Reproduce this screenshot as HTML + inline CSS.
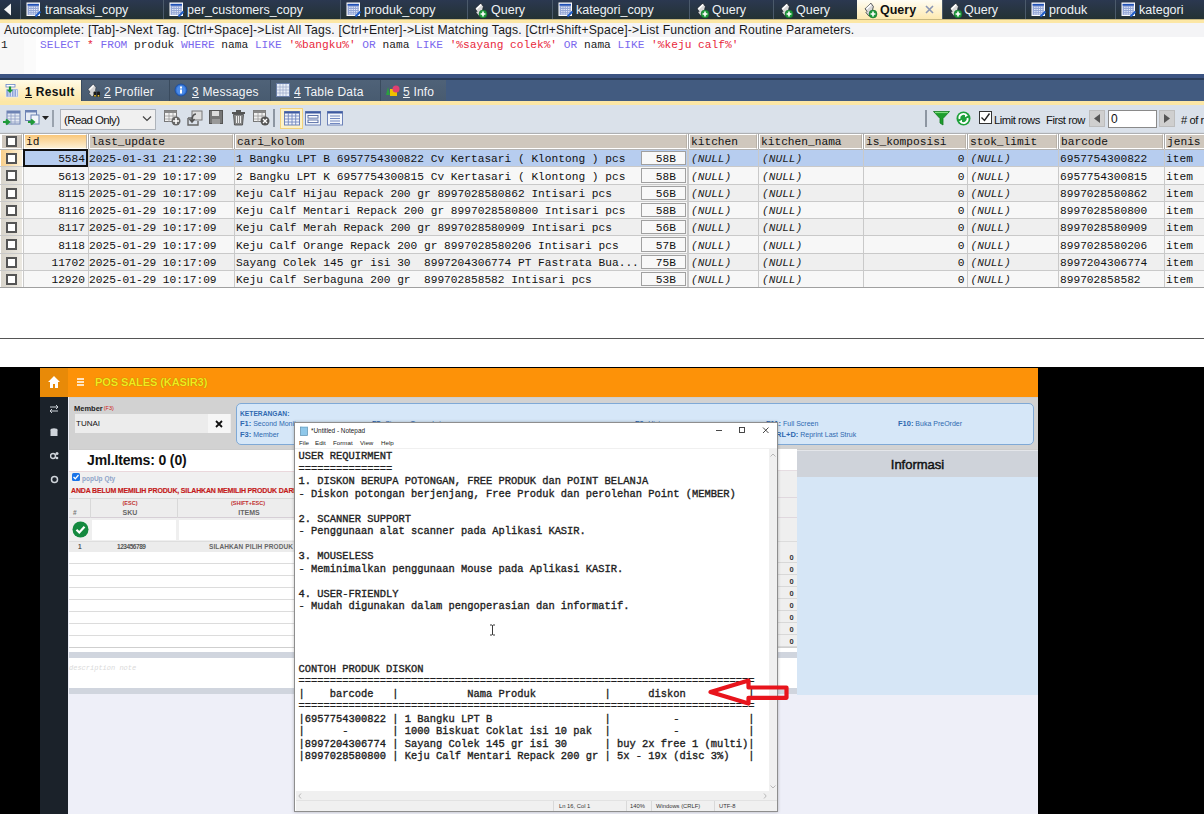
<!DOCTYPE html>
<html><head><meta charset="utf-8"><style>
*{margin:0;padding:0;box-sizing:border-box}
html,body{width:1204px;height:814px;overflow:hidden;background:#fff;position:relative;font-family:"Liberation Sans",sans-serif}
div,span{position:absolute}
.mono{font-family:"Liberation Mono",monospace}
.nw{white-space:nowrap}
</style></head><body>
<div style="left:0;top:0;width:1204px;height:19px;background:linear-gradient(#2b3850,#243234)"></div>
<div style="left:0;top:0;width:20px;height:19px;background:linear-gradient(#26344c,#1f2c36)"></div>
<svg style="position:absolute;left:0;top:0" width="20" height="19"><polygon points="4,9.5 11,3.5 11,15.5" fill="#f4f4f4"/></svg>
<div style="left:20px;top:0;width:1px;height:19px;background:#4b5a6b"></div>
<svg style="position:absolute;left:26px;top:2px" width="16" height="16" viewBox="0 0 16 16"><rect x="0.5" y="0.5" width="13.5" height="13.5" fill="#fdfdfd"/><rect x="1.6" y="1.6" width="11.3" height="11.3" fill="#93a6d6"/><rect x="1.6" y="2" width="11.3" height="1.6" fill="#1f50b6"/><path d="M3.2 5.3h9.5M3.2 7.5h9.5M3.2 9.7h9.5M3.2 11.9h9.5" stroke="#eef2fb" stroke-width="1" stroke-dasharray="1.3 1"/><path d="M9.5 14.5L14.5 9.5" stroke="#1f5ec8" stroke-width="2"/></svg>
<div class="nw" style="left:45px;top:1px;height:19px;line-height:19px;font-size:12.5px;color:#eef2f6">transaksi_copy</div>
<div style="left:163px;top:0;width:1px;height:19px;background:#4b5a6b"></div>
<svg style="position:absolute;left:169px;top:2px" width="16" height="16" viewBox="0 0 16 16"><rect x="0.5" y="0.5" width="13.5" height="13.5" fill="#fdfdfd"/><rect x="1.6" y="1.6" width="11.3" height="11.3" fill="#93a6d6"/><rect x="1.6" y="2" width="11.3" height="1.6" fill="#1f50b6"/><path d="M3.2 5.3h9.5M3.2 7.5h9.5M3.2 9.7h9.5M3.2 11.9h9.5" stroke="#eef2fb" stroke-width="1" stroke-dasharray="1.3 1"/><path d="M9.5 14.5L14.5 9.5" stroke="#1f5ec8" stroke-width="2"/></svg>
<div class="nw" style="left:187px;top:1px;height:19px;line-height:19px;font-size:12.5px;color:#eef2f6">per_customers_copy</div>
<div style="left:340px;top:0;width:1px;height:19px;background:#4b5a6b"></div>
<svg style="position:absolute;left:346px;top:2px" width="16" height="16" viewBox="0 0 16 16"><rect x="0.5" y="0.5" width="13.5" height="13.5" fill="#fdfdfd"/><rect x="1.6" y="1.6" width="11.3" height="11.3" fill="#93a6d6"/><rect x="1.6" y="2" width="11.3" height="1.6" fill="#1f50b6"/><path d="M3.2 5.3h9.5M3.2 7.5h9.5M3.2 9.7h9.5M3.2 11.9h9.5" stroke="#eef2fb" stroke-width="1" stroke-dasharray="1.3 1"/><path d="M9.5 14.5L14.5 9.5" stroke="#1f5ec8" stroke-width="2"/></svg>
<div class="nw" style="left:364px;top:1px;height:19px;line-height:19px;font-size:12.5px;color:#eef2f6">produk_copy</div>
<div style="left:467px;top:0;width:1px;height:19px;background:#4b5a6b"></div>
<svg style="position:absolute;left:474px;top:2px" width="15" height="17" viewBox="0 0 15 17"><path d="M7 1.2 L1 6.8 L3 9.3 L2 10.6 L5 14.2 L9.8 9.6 L8.6 7.5 L9.4 4.6 Z" fill="#d8d8d8" stroke="#1a2028" stroke-width="0.7"/><path d="M2.5 6.8 L7 2.6" stroke="#fff" stroke-width="1.6"/><circle cx="9" cy="12" r="4" fill="#1f9a3c" stroke="#0f6a28" stroke-width="0.5"/><path d="M9 9.6v4.8M6.6 12h4.8" stroke="#fff" stroke-width="1.6"/></svg>
<div class="nw" style="left:491px;top:1px;height:19px;line-height:19px;font-size:12.5px;color:#eef2f6">Query</div>
<div style="left:552px;top:0;width:1px;height:19px;background:#4b5a6b"></div>
<svg style="position:absolute;left:558px;top:2px" width="16" height="16" viewBox="0 0 16 16"><rect x="0.5" y="0.5" width="13.5" height="13.5" fill="#fdfdfd"/><rect x="1.6" y="1.6" width="11.3" height="11.3" fill="#93a6d6"/><rect x="1.6" y="2" width="11.3" height="1.6" fill="#1f50b6"/><path d="M3.2 5.3h9.5M3.2 7.5h9.5M3.2 9.7h9.5M3.2 11.9h9.5" stroke="#eef2fb" stroke-width="1" stroke-dasharray="1.3 1"/><path d="M9.5 14.5L14.5 9.5" stroke="#1f5ec8" stroke-width="2"/></svg>
<div class="nw" style="left:576px;top:1px;height:19px;line-height:19px;font-size:12.5px;color:#eef2f6">kategori_copy</div>
<div style="left:689px;top:0;width:1px;height:19px;background:#4b5a6b"></div>
<svg style="position:absolute;left:696px;top:2px" width="15" height="17" viewBox="0 0 15 17"><path d="M7 1.2 L1 6.8 L3 9.3 L2 10.6 L5 14.2 L9.8 9.6 L8.6 7.5 L9.4 4.6 Z" fill="#d8d8d8" stroke="#1a2028" stroke-width="0.7"/><path d="M2.5 6.8 L7 2.6" stroke="#fff" stroke-width="1.6"/><circle cx="9" cy="12" r="4" fill="#1f9a3c" stroke="#0f6a28" stroke-width="0.5"/><path d="M9 9.6v4.8M6.6 12h4.8" stroke="#fff" stroke-width="1.6"/></svg>
<div class="nw" style="left:712px;top:1px;height:19px;line-height:19px;font-size:12.5px;color:#eef2f6">Query</div>
<div style="left:773px;top:0;width:1px;height:19px;background:#4b5a6b"></div>
<svg style="position:absolute;left:780px;top:2px" width="15" height="17" viewBox="0 0 15 17"><path d="M7 1.2 L1 6.8 L3 9.3 L2 10.6 L5 14.2 L9.8 9.6 L8.6 7.5 L9.4 4.6 Z" fill="#d8d8d8" stroke="#1a2028" stroke-width="0.7"/><path d="M2.5 6.8 L7 2.6" stroke="#fff" stroke-width="1.6"/><circle cx="9" cy="12" r="4" fill="#1f9a3c" stroke="#0f6a28" stroke-width="0.5"/><path d="M9 9.6v4.8M6.6 12h4.8" stroke="#fff" stroke-width="1.6"/></svg>
<div class="nw" style="left:796px;top:1px;height:19px;line-height:19px;font-size:12.5px;color:#eef2f6">Query</div>
<div style="left:857px;top:0;width:85px;height:19px;background:linear-gradient(#fffdf4,#fde9b0)"></div>
<svg style="position:absolute;left:864px;top:2px" width="15" height="17" viewBox="0 0 15 17"><path d="M7 1.2 L1 6.8 L3 9.3 L2 10.6 L5 14.2 L9.8 9.6 L8.6 7.5 L9.4 4.6 Z" fill="#d8d8d8" stroke="#1a2028" stroke-width="0.7"/><path d="M2.5 6.8 L7 2.6" stroke="#fff" stroke-width="1.6"/><circle cx="9" cy="12" r="4" fill="#1f9a3c" stroke="#0f6a28" stroke-width="0.5"/><path d="M9 9.6v4.8M6.6 12h4.8" stroke="#fff" stroke-width="1.6"/></svg>
<div class="nw" style="left:880px;top:1px;height:19px;line-height:19px;font-size:12.5px;font-weight:bold;color:#111">Query</div>
<svg style="position:absolute;left:925px;top:5px" width="9" height="9"><path d="M1 1L8 8M8 1L1 8" stroke="#8a96b4" stroke-width="1.6"/></svg>
<div style="left:942px;top:0;width:1px;height:19px;background:#4b5a6b"></div>
<svg style="position:absolute;left:949px;top:2px" width="15" height="17" viewBox="0 0 15 17"><path d="M7 1.2 L1 6.8 L3 9.3 L2 10.6 L5 14.2 L9.8 9.6 L8.6 7.5 L9.4 4.6 Z" fill="#d8d8d8" stroke="#1a2028" stroke-width="0.7"/><path d="M2.5 6.8 L7 2.6" stroke="#fff" stroke-width="1.6"/><circle cx="9" cy="12" r="4" fill="#1f9a3c" stroke="#0f6a28" stroke-width="0.5"/><path d="M9 9.6v4.8M6.6 12h4.8" stroke="#fff" stroke-width="1.6"/></svg>
<div class="nw" style="left:964px;top:1px;height:19px;line-height:19px;font-size:12.5px;color:#eef2f6">Query</div>
<div style="left:1025px;top:0;width:1px;height:19px;background:#4b5a6b"></div>
<svg style="position:absolute;left:1031px;top:2px" width="16" height="16" viewBox="0 0 16 16"><rect x="0.5" y="0.5" width="13.5" height="13.5" fill="#fdfdfd"/><rect x="1.6" y="1.6" width="11.3" height="11.3" fill="#93a6d6"/><rect x="1.6" y="2" width="11.3" height="1.6" fill="#1f50b6"/><path d="M3.2 5.3h9.5M3.2 7.5h9.5M3.2 9.7h9.5M3.2 11.9h9.5" stroke="#eef2fb" stroke-width="1" stroke-dasharray="1.3 1"/><path d="M9.5 14.5L14.5 9.5" stroke="#1f5ec8" stroke-width="2"/></svg>
<div class="nw" style="left:1049px;top:1px;height:19px;line-height:19px;font-size:12.5px;color:#eef2f6">produk</div>
<div style="left:1115px;top:0;width:1px;height:19px;background:#4b5a6b"></div>
<svg style="position:absolute;left:1121px;top:2px" width="16" height="16" viewBox="0 0 16 16"><rect x="0.5" y="0.5" width="13.5" height="13.5" fill="#fdfdfd"/><rect x="1.6" y="1.6" width="11.3" height="11.3" fill="#93a6d6"/><rect x="1.6" y="2" width="11.3" height="1.6" fill="#1f50b6"/><path d="M3.2 5.3h9.5M3.2 7.5h9.5M3.2 9.7h9.5M3.2 11.9h9.5" stroke="#eef2fb" stroke-width="1" stroke-dasharray="1.3 1"/><path d="M9.5 14.5L14.5 9.5" stroke="#1f5ec8" stroke-width="2"/></svg>
<div class="nw" style="left:1139px;top:1px;height:19px;line-height:19px;font-size:12.5px;color:#eef2f6">kategori</div>
<div style="left:0;top:19px;width:1204px;height:4px;background:linear-gradient(#c8b880 0,#c8b880 25%,#fce7a6 25%)"></div>
<div style="left:0;top:23px;width:1204px;height:14px;background:#f4f4f6"></div>
<div class="nw" style="left:4px;top:23px;height:15px;line-height:15px;font-size:12.2px;letter-spacing:0.19px;color:#1a1a1a">Autocomplete: [Tab]-&gt;Next Tag. [Ctrl+Space]-&gt;List All Tags. [Ctrl+Enter]-&gt;List Matching Tags. [Ctrl+Shift+Space]-&gt;List Function and Routine Parameters.</div>
<div style="left:0;top:37px;width:1204px;height:37px;background:#fff"></div>
<div style="left:0;top:37px;width:24px;height:37px;background:#f7f7f7"></div>
<div style="left:24px;top:37px;width:12px;height:37px;background:#fbfbfb"></div>
<div class="mono nw" style="left:1px;top:38px;height:15px;line-height:15px;font-size:11.2px;color:#222">1</div>
<div class="mono" style="left:40px;top:38px;height:15px;line-height:15px;font-size:11.2px;white-space:pre"><span style="position:static;color:#7b68ee">SELECT</span><span style="position:static;color:#222"> </span><span style="position:static;color:#e8283c">*</span><span style="position:static;color:#222"> </span><span style="position:static;color:#7b68ee">FROM</span><span style="position:static;color:#222"> produk </span><span style="position:static;color:#7b68ee">WHERE</span><span style="position:static;color:#222"> nama </span><span style="position:static;color:#7b68ee">LIKE</span><span style="position:static;color:#222"> </span><span style="position:static;color:#e8283c">'%bangku%'</span><span style="position:static;color:#222"> </span><span style="position:static;color:#7b68ee">OR</span><span style="position:static;color:#222"> nama </span><span style="position:static;color:#7b68ee">LIKE</span><span style="position:static;color:#222"> </span><span style="position:static;color:#e8283c">'%sayang colek%'</span><span style="position:static;color:#222"> </span><span style="position:static;color:#7b68ee">OR</span><span style="position:static;color:#222"> nama </span><span style="position:static;color:#7b68ee">LIKE</span><span style="position:static;color:#222"> </span><span style="position:static;color:#e8283c">'%keju calf%'</span></div>
<div style="left:0;top:74px;width:1204px;height:5px;background:#3c5482"></div>
<div style="left:0;top:78px;width:1204px;height:2px;background:#2a3c58"></div>
<div style="left:0;top:80px;width:1204px;height:21px;background:#425b80"></div>
<div style="left:0px;top:80px;width:81px;height:21px;background:linear-gradient(#fffbe6,#fde7a8)"></div>
<div class="nw" style="left:25px;top:81.5px;height:21px;line-height:21px;font-size:12px;font-weight:bold;letter-spacing:0.35px;color:#111"><u style="text-decoration:underline">1</u> Result</div>
<div style="left:81px;top:80px;width:88px;height:21px;background:linear-gradient(#4f6278,#485b70);border-left:1px solid #3a4b5e"></div>
<div class="nw" style="left:104px;top:81.5px;height:21px;line-height:21px;font-size:12px;letter-spacing:0.2px;color:#f2f4f7"><u style="text-decoration:underline">2</u> Profiler</div>
<div style="left:169px;top:80px;width:101px;height:21px;background:linear-gradient(#4f6278,#485b70);border-left:1px solid #3a4b5e"></div>
<div class="nw" style="left:192px;top:81.5px;height:21px;line-height:21px;font-size:12px;letter-spacing:0.2px;color:#f2f4f7"><u style="text-decoration:underline">3</u> Messages</div>
<div style="left:270px;top:80px;width:110px;height:21px;background:linear-gradient(#4f6278,#485b70);border-left:1px solid #3a4b5e"></div>
<div class="nw" style="left:294px;top:81.5px;height:21px;line-height:21px;font-size:12px;letter-spacing:0.2px;color:#f2f4f7"><u style="text-decoration:underline">4</u> Table Data</div>
<div style="left:380px;top:80px;width:66px;height:21px;background:linear-gradient(#4f6278,#485b70);border-left:1px solid #3a4b5e"></div>
<div class="nw" style="left:403px;top:81.5px;height:21px;line-height:21px;font-size:12px;letter-spacing:0.2px;color:#f2f4f7"><u style="text-decoration:underline">5</u> Info</div>
<svg style="position:absolute;left:5px;top:83px" width="14" height="15"><rect x="1" y="1.5" width="9" height="2.5" fill="#fff" stroke="#6a86c8" stroke-width="0.8"/><rect x="1" y="6" width="12" height="8" fill="#8ea3d8" stroke="#e8eefa" stroke-width="0.6"/><path d="M4 7v6.5M6.5 7v6.5M9 7v6.5M11.5 7v6.5" stroke="#f2f5fc" stroke-width="0.8"/><path d="M5 3.5v4" stroke="#1e9a30" stroke-width="2.2"/><path d="M1.8 6.8L5 10 8.2 6.8Z" fill="#1e9a30"/></svg>
<svg style="position:absolute;left:87px;top:83px" width="14" height="15"><path d="M6.5 1L1 6.5 3 9 2 10.5 5 14 9.5 9.5 8.5 7.5 9 4.5Z" fill="#d4d4d4" stroke="#2a3340" stroke-width="0.6"/><path d="M2.5 6.5L6.5 2.5" stroke="#fff" stroke-width="1.4"/><rect x="6.5" y="8.5" width="3" height="5.5" rx="1" fill="#1a1a1a"/><rect x="10" y="8.5" width="3" height="5.5" rx="1" fill="#1a1a1a"/><rect x="7.2" y="12" width="1.6" height="1.6" fill="#e8c030"/><rect x="10.7" y="12" width="1.6" height="1.6" fill="#e8c030"/></svg>
<svg style="position:absolute;left:174px;top:83px" width="14" height="14"><circle cx="7" cy="7" r="6" fill="#2f6fd0" stroke="#1b4a9a" stroke-width="0.8"/><circle cx="7" cy="7" r="4.5" fill="#4a8ae8"/><rect x="6" y="3.5" width="2" height="2" fill="#fff"/><rect x="6" y="6.5" width="2" height="4" fill="#fff"/></svg>
<svg style="position:absolute;left:276px;top:83px" width="14" height="14"><rect x="0.5" y="0.5" width="13" height="13" fill="#e8eef8" stroke="#6a7fa8"/><path d="M1 4h12M1 7h12M1 10h12M4 1v12M7 1v12M10 1v12" stroke="#9aa8c8" stroke-width="0.7"/></svg>
<svg style="position:absolute;left:385px;top:83px" width="16" height="14"><path d="M1 12L3 4L5 12Z" fill="#2aa040"/><rect x="5" y="6" width="7" height="7" fill="#f0c000"/><circle cx="11" cy="6" r="3.5" fill="#e04070"/></svg>
<div style="left:0;top:101px;width:1204px;height:4px;background:#fce7a6"></div>
<div style="left:446px;top:80px;width:758px;height:21px;background:#425b80"></div>
<div style="left:0;top:105px;width:1204px;height:28px;background:#dae1ea"></div>

<svg style="position:absolute;left:3px;top:110px" width="18" height="16"><rect x="4" y="1" width="13" height="13" fill="#e6ebf4" stroke="#6d82b3"/><rect x="4" y="1" width="13" height="2.5" fill="#6d82b3"/><path d="M4 6h13M4 9h13M4 12h13M8 3v11M12 3v11" stroke="#8d9cc4" stroke-width="0.8"/><path d="M0 12h5M3 9.5l3 2.5-3 2.5" stroke="#1f9a3a" stroke-width="2.2" fill="none"/></svg>
<svg style="position:absolute;left:25px;top:110px" width="26" height="16"><rect x="0.5" y="0.5" width="11" height="10" fill="#e6ebf4" stroke="#6d82b3"/><rect x="0.5" y="0.5" width="11" height="2" fill="#6d82b3"/><rect x="6" y="5" width="8" height="9" fill="#f4f6fa" stroke="#6d82b3"/><path d="M3 12h5M6 9.5l3 2.5-3 2.5" stroke="#1f9a3a" stroke-width="2" fill="none"/><polygon points="17,6 24,6 20.5,10" fill="#222"/></svg>
<div style="left:52px;top:110px;width:2px;height:17px;background:#9aa3ae"></div>
<svg style="position:absolute;left:164px;top:110px" width="17" height="16"><rect x="0.5" y="0.5" width="12" height="11" fill="#f0f0f0" stroke="#777"/><rect x="0.5" y="0.5" width="12" height="2.5" fill="#888"/><path d="M1 6h11M1 9h11M5 3v9M9 3v9" stroke="#999" stroke-width="0.8"/><circle cx="12" cy="11" r="4.5" fill="#666"/><path d="M12 8v6M9 11h6" stroke="#fff" stroke-width="1.6"/></svg>
<svg style="position:absolute;left:187px;top:110px" width="16" height="16"><rect x="5" y="1" width="10" height="9" fill="#ddd" stroke="#777"/><path d="M1 8h4M1 8v7h10v-4" stroke="#666" stroke-width="1.4" fill="none"/><path d="M9 4C5 4 5 8 5 11M2.5 9L5 12L7.5 9" stroke="#555" stroke-width="1.6" fill="none"/></svg>
<svg style="position:absolute;left:209px;top:110px" width="15" height="15"><rect x="0.5" y="0.5" width="13" height="13" fill="#777" stroke="#555"/><rect x="3" y="1" width="7" height="5" fill="#ddd"/><rect x="3" y="9" width="8" height="5" fill="#999"/></svg>
<svg style="position:absolute;left:231px;top:109px" width="15" height="17"><rect x="1" y="3" width="13" height="2" fill="#555"/><rect x="5" y="1" width="5" height="2" fill="#555"/><path d="M2.5 5.5L3.5 16H11.5L12.5 5.5Z" fill="#888" stroke="#444" stroke-width="0.8"/><path d="M5.5 7v7M7.5 7v7M9.5 7v7" stroke="#eee" stroke-width="1"/></svg>
<svg style="position:absolute;left:253px;top:110px" width="17" height="16"><rect x="0.5" y="0.5" width="12" height="11" fill="#f0f0f0" stroke="#777"/><rect x="0.5" y="0.5" width="12" height="2.5" fill="#888"/><path d="M1 6h11M1 9h11M5 3v9M9 3v9" stroke="#999" stroke-width="0.8"/><circle cx="12" cy="11" r="4.5" fill="#555"/><path d="M10 9l4 4M14 9l-4 4" stroke="#fff" stroke-width="1.4"/></svg>
<div style="left:273px;top:109px;width:2px;height:18px;background:#8d96a2"></div>
<div style="left:280px;top:108px;width:23px;height:21px;background:#fdf2c8;border:1px solid #f3d27a"></div>
<svg style="position:absolute;left:284px;top:111px" width="16" height="15"><rect x="0.5" y="0.5" width="15" height="13.5" fill="#f2f5fb" stroke="#6d82b8"/><rect x="0.5" y="0.5" width="15" height="2" fill="#3e5aa0"/><path d="M1 5h14M1 8h14M1 11h14M4.3 2v12M8 2v12M11.7 2v12" stroke="#7288c0" stroke-width="0.9"/></svg>
<svg style="position:absolute;left:305px;top:111px" width="16" height="15"><rect x="0.5" y="0.5" width="15" height="13.5" fill="#f2f5fb" stroke="#6d82b8"/><rect x="0.5" y="0.5" width="15" height="2" fill="#3e5aa0"/><rect x="3" y="4.5" width="10" height="2.6" fill="#fff" stroke="#4e66a0" stroke-width="0.9"/><rect x="3" y="9" width="10" height="2.6" fill="#fff" stroke="#4e66a0" stroke-width="0.9"/></svg>
<svg style="position:absolute;left:327px;top:111px" width="16" height="15"><rect x="0.5" y="0.5" width="15" height="13.5" fill="#f2f5fb" stroke="#6d82b8"/><rect x="0.5" y="0.5" width="15" height="2" fill="#3e5aa0"/><path d="M3 5h10M3 7.5h10M3 10h10M3 12.5h10" stroke="#7288c0" stroke-width="1"/></svg>
<div style="left:925px;top:110px;width:2px;height:17px;background:#8d96a2"></div>
<svg style="position:absolute;left:933px;top:111px" width="17" height="15"><path d="M0.5 0.5H16.5L10 7.5V14L7 12V7.5Z" fill="#1e9e2e" stroke="#137a20" stroke-width="0.8"/><path d="M2 1.5H15" stroke="#7fdc7f" stroke-width="1.2"/></svg>
<svg style="position:absolute;left:956px;top:111px" width="15" height="15"><circle cx="7.5" cy="7.5" r="7" fill="#1ea03a"/><path d="M3.5 8A4 4 0 0 1 10.5 4.5M11.5 7A4 4 0 0 1 4.5 10.5" stroke="#fff" stroke-width="1.8" fill="none"/><path d="M9 2.5l3 2-3 1.8z M6 12.5l-3-2 3-1.8z" fill="#fff"/></svg>
<div style="left:979px;top:111px;width:13px;height:13px;background:#fff;border:1px solid #333"></div>
<svg style="position:absolute;left:980px;top:112px" width="11" height="11"><path d="M1.5 5.5L4.5 8.5L9.5 1.5" stroke="#222" stroke-width="1.4" fill="none"/></svg>
<div class="nw" style="left:994px;top:112.5px;line-height:15px;font-size:11.2px;letter-spacing:-0.45px;color:#111">Limit rows</div>
<div class="nw" style="left:1046px;top:112.5px;line-height:15px;font-size:11.2px;letter-spacing:-0.45px;color:#111">First row</div>
<div style="left:1089px;top:110px;width:16px;height:17px;background:#cfcfcf;border:1px solid #bdbdbd"></div>
<svg style="position:absolute;left:1092px;top:113px" width="10" height="11"><polygon points="2,5.5 8,1 8,10" fill="#555"/></svg>
<div style="left:1108px;top:110px;width:49px;height:18px;background:#fff;border:1px solid #8a8a8a"></div>
<div class="nw" style="left:1111px;top:112px;line-height:15px;font-size:12px;color:#111">0</div>
<div style="left:1159px;top:110px;width:16px;height:17px;background:#cfcfcf;border:1px solid #bdbdbd"></div>
<svg style="position:absolute;left:1162px;top:113px" width="10" height="11"><polygon points="8,5.5 2,1 2,10" fill="#555"/></svg>
<div class="nw" style="left:1181px;top:112.5px;line-height:15px;font-size:11.2px;letter-spacing:-0.45px;color:#111"># of r</div>
<div style="left:60px;top:109px;width:96px;height:21px;background:#f0f0f0;border:1px solid #aeb4bb"></div>
<div class="nw" style="left:64px;top:110.5px;line-height:18px;font-size:11.5px;letter-spacing:-0.6px;color:#111">(Read Only)</div>
<svg style="position:absolute;left:142px;top:115px" width="10" height="8"><path d="M1 1.5L5 5.5L9 1.5" stroke="#444" stroke-width="1.2" fill="none"/></svg>

<div style="left:0;top:132px;width:1204px;height:1px;background:#d4dae2"></div>
<div style="left:0;top:133px;width:1204px;height:155px;background:#fff"></div>
<div style="left:0;top:133px;width:1204px;height:1px;background:#aeb0b3"></div>
<div style="left:1px;top:134px;width:21px;height:15px;background:#cfc7bd;border-top:1px solid #fff;border-left:1px solid #fff;border-bottom:1px solid #fff;border-right:1px solid #b9b2a8"></div>
<div style="left:24px;top:134px;width:63px;height:15px;background:linear-gradient(#f9c77a,#fdf0d4);border-top:1px solid #fff;border-left:1px solid #fff;border-bottom:1px solid #fff;border-right:1px solid #b9b2a8"></div>
<div style="left:23px;top:134px;width:1px;height:16px;background:#a9a9a9"></div>
<div class="mono nw" style="left:26px;top:134px;height:16px;line-height:16px;font-size:11.2px;color:#111">id</div>
<div style="left:89px;top:134px;width:144px;height:15px;background:#cfc7bd;border-top:1px solid #fff;border-left:1px solid #fff;border-bottom:1px solid #fff;border-right:1px solid #b9b2a8"></div>
<div style="left:88px;top:134px;width:1px;height:16px;background:#a9a9a9"></div>
<div class="mono nw" style="left:91px;top:134px;height:16px;line-height:16px;font-size:11.2px;color:#111">last_update</div>
<div style="left:235px;top:134px;width:452px;height:15px;background:#cfc7bd;border-top:1px solid #fff;border-left:1px solid #fff;border-bottom:1px solid #fff;border-right:1px solid #b9b2a8"></div>
<div style="left:234px;top:134px;width:1px;height:16px;background:#a9a9a9"></div>
<div class="mono nw" style="left:237px;top:134px;height:16px;line-height:16px;font-size:11.2px;color:#111">cari_kolom</div>
<div style="left:689px;top:134px;width:68px;height:15px;background:#cfc7bd;border-top:1px solid #fff;border-left:1px solid #fff;border-bottom:1px solid #fff;border-right:1px solid #b9b2a8"></div>
<div style="left:688px;top:134px;width:1px;height:16px;background:#a9a9a9"></div>
<div class="mono nw" style="left:691px;top:134px;height:16px;line-height:16px;font-size:11.2px;color:#111">kitchen</div>
<div style="left:759px;top:134px;width:103px;height:15px;background:#cfc7bd;border-top:1px solid #fff;border-left:1px solid #fff;border-bottom:1px solid #fff;border-right:1px solid #b9b2a8"></div>
<div style="left:758px;top:134px;width:1px;height:16px;background:#a9a9a9"></div>
<div class="mono nw" style="left:761px;top:134px;height:16px;line-height:16px;font-size:11.2px;color:#111">kitchen_nama</div>
<div style="left:864px;top:134px;width:102px;height:15px;background:#cfc7bd;border-top:1px solid #fff;border-left:1px solid #fff;border-bottom:1px solid #fff;border-right:1px solid #b9b2a8"></div>
<div style="left:863px;top:134px;width:1px;height:16px;background:#a9a9a9"></div>
<div class="mono nw" style="left:866px;top:134px;height:16px;line-height:16px;font-size:11.2px;color:#111">is_komposisi</div>
<div style="left:968px;top:134px;width:89px;height:15px;background:#cfc7bd;border-top:1px solid #fff;border-left:1px solid #fff;border-bottom:1px solid #fff;border-right:1px solid #b9b2a8"></div>
<div style="left:967px;top:134px;width:1px;height:16px;background:#a9a9a9"></div>
<div class="mono nw" style="left:970px;top:134px;height:16px;line-height:16px;font-size:11.2px;color:#111">stok_limit</div>
<div style="left:1059px;top:134px;width:104px;height:15px;background:#cfc7bd;border-top:1px solid #fff;border-left:1px solid #fff;border-bottom:1px solid #fff;border-right:1px solid #b9b2a8"></div>
<div style="left:1058px;top:134px;width:1px;height:16px;background:#a9a9a9"></div>
<div class="mono nw" style="left:1061px;top:134px;height:16px;line-height:16px;font-size:11.2px;color:#111">barcode</div>
<div style="left:1165px;top:134px;width:44px;height:15px;background:#cfc7bd;border-top:1px solid #fff;border-left:1px solid #fff;border-bottom:1px solid #fff;border-right:1px solid #b9b2a8"></div>
<div style="left:1164px;top:134px;width:1px;height:16px;background:#a9a9a9"></div>
<div class="mono nw" style="left:1167px;top:134px;height:16px;line-height:16px;font-size:11.2px;color:#111">jenis</div>
<div style="left:0;top:149px;width:1204px;height:1px;background:#b4b4b4"></div>
<div style="left:6px;top:136px;width:11px;height:11px;background:#fff;border:2px solid #555"></div>
<div style="left:23px;top:150px;width:1181px;height:16px;background:#b7cdef"></div>
<div style="left:1px;top:150px;width:21px;height:16px;background:linear-gradient(90deg,#f9cf8a,#fdf1d8)"></div>
<div style="left:6px;top:152.5px;width:11px;height:11px;background:#fff;border:2px solid #555"></div>
<div style="left:0;top:166px;width:1204px;height:1px;background:#c9c9c9"></div>
<div class="mono" style="right:1119px;white-space:pre;top:150.8px;height:17px;line-height:17px;font-size:11.2px;color:#111">5584</div>
<div class="mono" style="left:89px;white-space:pre;top:150.8px;height:17px;line-height:17px;font-size:11.2px;color:#111">2025-01-31 21:22:30</div>
<div class="mono" style="left:236px;white-space:pre;top:150.8px;height:17px;line-height:17px;font-size:11.2px;color:#111">1 Bangku LPT B 6957754300822 Cv Kertasari ( Klontong ) pcs</div>
<div style="left:641px;top:151px;width:45px;height:14px;background:#f8f8f8;border:1px solid #a0a0a0"></div>
<div class="mono" style="right:528px;white-space:pre;top:150.8px;height:17px;line-height:17px;font-size:11.2px;color:#111">58B</div>
<div class="mono" style="left:691px;white-space:pre;top:150.8px;height:17px;line-height:17px;font-size:11.2px;color:#222;font-style:italic">(NULL)</div>
<div class="mono" style="left:762px;white-space:pre;top:150.8px;height:17px;line-height:17px;font-size:11.2px;color:#222;font-style:italic">(NULL)</div>
<div class="mono" style="right:239.5px;white-space:pre;top:150.8px;height:17px;line-height:17px;font-size:11.2px;color:#111">0</div>
<div class="mono" style="left:970.5px;white-space:pre;top:150.8px;height:17px;line-height:17px;font-size:11.2px;color:#222;font-style:italic">(NULL)</div>
<div class="mono" style="left:1060px;white-space:pre;top:150.8px;height:17px;line-height:17px;font-size:11.2px;color:#111">6957754300822</div>
<div class="mono" style="left:1166px;white-space:pre;top:150.8px;height:17px;line-height:17px;font-size:11.2px;color:#111">item</div>
<div style="left:23px;top:167px;width:1181px;height:17px;background:#f7f7f7"></div>
<div style="left:1px;top:167px;width:21px;height:17px;background:linear-gradient(90deg,#d8d4cb,#ece9e2)"></div>
<div style="left:6px;top:169.5px;width:11px;height:11px;background:#fff;border:2px solid #555"></div>
<div style="left:0;top:184px;width:1204px;height:1px;background:#c9c9c9"></div>
<div class="mono" style="right:1119px;white-space:pre;top:167.8px;height:18px;line-height:18px;font-size:11.2px;color:#111">5613</div>
<div class="mono" style="left:89px;white-space:pre;top:167.8px;height:18px;line-height:18px;font-size:11.2px;color:#111">2025-01-29 10:17:09</div>
<div class="mono" style="left:236px;white-space:pre;top:167.8px;height:18px;line-height:18px;font-size:11.2px;color:#111">2 Bangku LPT K 6957754300815 Cv Kertasari ( Klontong ) pcs</div>
<div style="left:641px;top:168px;width:45px;height:15px;background:#f8f8f8;border:1px solid #a0a0a0"></div>
<div class="mono" style="right:528px;white-space:pre;top:167.8px;height:18px;line-height:18px;font-size:11.2px;color:#111">58B</div>
<div class="mono" style="left:691px;white-space:pre;top:167.8px;height:18px;line-height:18px;font-size:11.2px;color:#222;font-style:italic">(NULL)</div>
<div class="mono" style="left:762px;white-space:pre;top:167.8px;height:18px;line-height:18px;font-size:11.2px;color:#222;font-style:italic">(NULL)</div>
<div class="mono" style="right:239.5px;white-space:pre;top:167.8px;height:18px;line-height:18px;font-size:11.2px;color:#111">0</div>
<div class="mono" style="left:970.5px;white-space:pre;top:167.8px;height:18px;line-height:18px;font-size:11.2px;color:#222;font-style:italic">(NULL)</div>
<div class="mono" style="left:1060px;white-space:pre;top:167.8px;height:18px;line-height:18px;font-size:11.2px;color:#111">6957754300815</div>
<div class="mono" style="left:1166px;white-space:pre;top:167.8px;height:18px;line-height:18px;font-size:11.2px;color:#111">item</div>
<div style="left:23px;top:185px;width:1181px;height:16px;background:#efefef"></div>
<div style="left:1px;top:185px;width:21px;height:16px;background:linear-gradient(90deg,#d8d4cb,#ece9e2)"></div>
<div style="left:6px;top:187.5px;width:11px;height:11px;background:#fff;border:2px solid #555"></div>
<div style="left:0;top:201px;width:1204px;height:1px;background:#c9c9c9"></div>
<div class="mono" style="right:1119px;white-space:pre;top:185.8px;height:17px;line-height:17px;font-size:11.2px;color:#111">8115</div>
<div class="mono" style="left:89px;white-space:pre;top:185.8px;height:17px;line-height:17px;font-size:11.2px;color:#111">2025-01-29 10:17:09</div>
<div class="mono" style="left:236px;white-space:pre;top:185.8px;height:17px;line-height:17px;font-size:11.2px;color:#111">Keju Calf Hijau Repack 200 gr 8997028580862 Intisari pcs</div>
<div style="left:641px;top:186px;width:45px;height:14px;background:#f8f8f8;border:1px solid #a0a0a0"></div>
<div class="mono" style="right:528px;white-space:pre;top:185.8px;height:17px;line-height:17px;font-size:11.2px;color:#111">56B</div>
<div class="mono" style="left:691px;white-space:pre;top:185.8px;height:17px;line-height:17px;font-size:11.2px;color:#222;font-style:italic">(NULL)</div>
<div class="mono" style="left:762px;white-space:pre;top:185.8px;height:17px;line-height:17px;font-size:11.2px;color:#222;font-style:italic">(NULL)</div>
<div class="mono" style="right:239.5px;white-space:pre;top:185.8px;height:17px;line-height:17px;font-size:11.2px;color:#111">0</div>
<div class="mono" style="left:970.5px;white-space:pre;top:185.8px;height:17px;line-height:17px;font-size:11.2px;color:#222;font-style:italic">(NULL)</div>
<div class="mono" style="left:1060px;white-space:pre;top:185.8px;height:17px;line-height:17px;font-size:11.2px;color:#111">8997028580862</div>
<div class="mono" style="left:1166px;white-space:pre;top:185.8px;height:17px;line-height:17px;font-size:11.2px;color:#111">item</div>
<div style="left:23px;top:202px;width:1181px;height:16px;background:#f7f7f7"></div>
<div style="left:1px;top:202px;width:21px;height:16px;background:linear-gradient(90deg,#d8d4cb,#ece9e2)"></div>
<div style="left:6px;top:204.5px;width:11px;height:11px;background:#fff;border:2px solid #555"></div>
<div style="left:0;top:218px;width:1204px;height:1px;background:#c9c9c9"></div>
<div class="mono" style="right:1119px;white-space:pre;top:202.8px;height:17px;line-height:17px;font-size:11.2px;color:#111">8116</div>
<div class="mono" style="left:89px;white-space:pre;top:202.8px;height:17px;line-height:17px;font-size:11.2px;color:#111">2025-01-29 10:17:09</div>
<div class="mono" style="left:236px;white-space:pre;top:202.8px;height:17px;line-height:17px;font-size:11.2px;color:#111">Keju Calf Mentari Repack 200 gr 8997028580800 Intisari pcs</div>
<div style="left:641px;top:203px;width:45px;height:14px;background:#f8f8f8;border:1px solid #a0a0a0"></div>
<div class="mono" style="right:528px;white-space:pre;top:202.8px;height:17px;line-height:17px;font-size:11.2px;color:#111">58B</div>
<div class="mono" style="left:691px;white-space:pre;top:202.8px;height:17px;line-height:17px;font-size:11.2px;color:#222;font-style:italic">(NULL)</div>
<div class="mono" style="left:762px;white-space:pre;top:202.8px;height:17px;line-height:17px;font-size:11.2px;color:#222;font-style:italic">(NULL)</div>
<div class="mono" style="right:239.5px;white-space:pre;top:202.8px;height:17px;line-height:17px;font-size:11.2px;color:#111">0</div>
<div class="mono" style="left:970.5px;white-space:pre;top:202.8px;height:17px;line-height:17px;font-size:11.2px;color:#222;font-style:italic">(NULL)</div>
<div class="mono" style="left:1060px;white-space:pre;top:202.8px;height:17px;line-height:17px;font-size:11.2px;color:#111">8997028580800</div>
<div class="mono" style="left:1166px;white-space:pre;top:202.8px;height:17px;line-height:17px;font-size:11.2px;color:#111">item</div>
<div style="left:23px;top:219px;width:1181px;height:16px;background:#efefef"></div>
<div style="left:1px;top:219px;width:21px;height:16px;background:linear-gradient(90deg,#d8d4cb,#ece9e2)"></div>
<div style="left:6px;top:221.5px;width:11px;height:11px;background:#fff;border:2px solid #555"></div>
<div style="left:0;top:235px;width:1204px;height:1px;background:#c9c9c9"></div>
<div class="mono" style="right:1119px;white-space:pre;top:219.8px;height:17px;line-height:17px;font-size:11.2px;color:#111">8117</div>
<div class="mono" style="left:89px;white-space:pre;top:219.8px;height:17px;line-height:17px;font-size:11.2px;color:#111">2025-01-29 10:17:09</div>
<div class="mono" style="left:236px;white-space:pre;top:219.8px;height:17px;line-height:17px;font-size:11.2px;color:#111">Keju Calf Merah Repack 200 gr 8997028580909 Intisari pcs</div>
<div style="left:641px;top:220px;width:45px;height:14px;background:#f8f8f8;border:1px solid #a0a0a0"></div>
<div class="mono" style="right:528px;white-space:pre;top:219.8px;height:17px;line-height:17px;font-size:11.2px;color:#111">56B</div>
<div class="mono" style="left:691px;white-space:pre;top:219.8px;height:17px;line-height:17px;font-size:11.2px;color:#222;font-style:italic">(NULL)</div>
<div class="mono" style="left:762px;white-space:pre;top:219.8px;height:17px;line-height:17px;font-size:11.2px;color:#222;font-style:italic">(NULL)</div>
<div class="mono" style="right:239.5px;white-space:pre;top:219.8px;height:17px;line-height:17px;font-size:11.2px;color:#111">0</div>
<div class="mono" style="left:970.5px;white-space:pre;top:219.8px;height:17px;line-height:17px;font-size:11.2px;color:#222;font-style:italic">(NULL)</div>
<div class="mono" style="left:1060px;white-space:pre;top:219.8px;height:17px;line-height:17px;font-size:11.2px;color:#111">8997028580909</div>
<div class="mono" style="left:1166px;white-space:pre;top:219.8px;height:17px;line-height:17px;font-size:11.2px;color:#111">item</div>
<div style="left:23px;top:236px;width:1181px;height:17px;background:#f7f7f7"></div>
<div style="left:1px;top:236px;width:21px;height:17px;background:linear-gradient(90deg,#d8d4cb,#ece9e2)"></div>
<div style="left:6px;top:238.5px;width:11px;height:11px;background:#fff;border:2px solid #555"></div>
<div style="left:0;top:253px;width:1204px;height:1px;background:#c9c9c9"></div>
<div class="mono" style="right:1119px;white-space:pre;top:236.8px;height:18px;line-height:18px;font-size:11.2px;color:#111">8118</div>
<div class="mono" style="left:89px;white-space:pre;top:236.8px;height:18px;line-height:18px;font-size:11.2px;color:#111">2025-01-29 10:17:09</div>
<div class="mono" style="left:236px;white-space:pre;top:236.8px;height:18px;line-height:18px;font-size:11.2px;color:#111">Keju Calf Orange Repack 200 gr 8997028580206 Intisari pcs</div>
<div style="left:641px;top:237px;width:45px;height:15px;background:#f8f8f8;border:1px solid #a0a0a0"></div>
<div class="mono" style="right:528px;white-space:pre;top:236.8px;height:18px;line-height:18px;font-size:11.2px;color:#111">57B</div>
<div class="mono" style="left:691px;white-space:pre;top:236.8px;height:18px;line-height:18px;font-size:11.2px;color:#222;font-style:italic">(NULL)</div>
<div class="mono" style="left:762px;white-space:pre;top:236.8px;height:18px;line-height:18px;font-size:11.2px;color:#222;font-style:italic">(NULL)</div>
<div class="mono" style="right:239.5px;white-space:pre;top:236.8px;height:18px;line-height:18px;font-size:11.2px;color:#111">0</div>
<div class="mono" style="left:970.5px;white-space:pre;top:236.8px;height:18px;line-height:18px;font-size:11.2px;color:#222;font-style:italic">(NULL)</div>
<div class="mono" style="left:1060px;white-space:pre;top:236.8px;height:18px;line-height:18px;font-size:11.2px;color:#111">8997028580206</div>
<div class="mono" style="left:1166px;white-space:pre;top:236.8px;height:18px;line-height:18px;font-size:11.2px;color:#111">item</div>
<div style="left:23px;top:254px;width:1181px;height:16px;background:#efefef"></div>
<div style="left:1px;top:254px;width:21px;height:16px;background:linear-gradient(90deg,#d8d4cb,#ece9e2)"></div>
<div style="left:6px;top:256.5px;width:11px;height:11px;background:#fff;border:2px solid #555"></div>
<div style="left:0;top:270px;width:1204px;height:1px;background:#c9c9c9"></div>
<div class="mono" style="right:1119px;white-space:pre;top:254.8px;height:17px;line-height:17px;font-size:11.2px;color:#111">11702</div>
<div class="mono" style="left:89px;white-space:pre;top:254.8px;height:17px;line-height:17px;font-size:11.2px;color:#111">2025-01-29 10:17:09</div>
<div class="mono" style="left:236px;white-space:pre;top:254.8px;height:17px;line-height:17px;font-size:11.2px;color:#111">Sayang Colek 145 gr isi 30  8997204306774 PT Fastrata Bua...</div>
<div style="left:641px;top:255px;width:45px;height:14px;background:#f8f8f8;border:1px solid #a0a0a0"></div>
<div class="mono" style="right:528px;white-space:pre;top:254.8px;height:17px;line-height:17px;font-size:11.2px;color:#111">75B</div>
<div class="mono" style="left:691px;white-space:pre;top:254.8px;height:17px;line-height:17px;font-size:11.2px;color:#222;font-style:italic">(NULL)</div>
<div class="mono" style="left:762px;white-space:pre;top:254.8px;height:17px;line-height:17px;font-size:11.2px;color:#222;font-style:italic">(NULL)</div>
<div class="mono" style="right:239.5px;white-space:pre;top:254.8px;height:17px;line-height:17px;font-size:11.2px;color:#111">0</div>
<div class="mono" style="left:970.5px;white-space:pre;top:254.8px;height:17px;line-height:17px;font-size:11.2px;color:#222;font-style:italic">(NULL)</div>
<div class="mono" style="left:1060px;white-space:pre;top:254.8px;height:17px;line-height:17px;font-size:11.2px;color:#111">8997204306774</div>
<div class="mono" style="left:1166px;white-space:pre;top:254.8px;height:17px;line-height:17px;font-size:11.2px;color:#111">item</div>
<div style="left:23px;top:271px;width:1181px;height:16px;background:#f7f7f7"></div>
<div style="left:1px;top:271px;width:21px;height:16px;background:linear-gradient(90deg,#d8d4cb,#ece9e2)"></div>
<div style="left:6px;top:273.5px;width:11px;height:11px;background:#fff;border:2px solid #555"></div>
<div style="left:0;top:287px;width:1204px;height:1px;background:#c9c9c9"></div>
<div class="mono" style="right:1119px;white-space:pre;top:271.8px;height:17px;line-height:17px;font-size:11.2px;color:#111">12920</div>
<div class="mono" style="left:89px;white-space:pre;top:271.8px;height:17px;line-height:17px;font-size:11.2px;color:#111">2025-01-29 10:17:09</div>
<div class="mono" style="left:236px;white-space:pre;top:271.8px;height:17px;line-height:17px;font-size:11.2px;color:#111">Keju Calf Serbaguna 200 gr  899702858582 Intisari pcs</div>
<div style="left:641px;top:272px;width:45px;height:14px;background:#f8f8f8;border:1px solid #a0a0a0"></div>
<div class="mono" style="right:528px;white-space:pre;top:271.8px;height:17px;line-height:17px;font-size:11.2px;color:#111">53B</div>
<div class="mono" style="left:691px;white-space:pre;top:271.8px;height:17px;line-height:17px;font-size:11.2px;color:#222;font-style:italic">(NULL)</div>
<div class="mono" style="left:762px;white-space:pre;top:271.8px;height:17px;line-height:17px;font-size:11.2px;color:#222;font-style:italic">(NULL)</div>
<div class="mono" style="right:239.5px;white-space:pre;top:271.8px;height:17px;line-height:17px;font-size:11.2px;color:#111">0</div>
<div class="mono" style="left:970.5px;white-space:pre;top:271.8px;height:17px;line-height:17px;font-size:11.2px;color:#222;font-style:italic">(NULL)</div>
<div class="mono" style="left:1060px;white-space:pre;top:271.8px;height:17px;line-height:17px;font-size:11.2px;color:#111">899702858582</div>
<div class="mono" style="left:1166px;white-space:pre;top:271.8px;height:17px;line-height:17px;font-size:11.2px;color:#111">item</div>
<div style="left:23px;top:149px;width:1px;height:138px;background:#c9c9c9"></div>
<div style="left:88px;top:149px;width:1px;height:138px;background:#c9c9c9"></div>
<div style="left:234px;top:149px;width:1px;height:138px;background:#c9c9c9"></div>
<div style="left:688px;top:149px;width:1px;height:138px;background:#c9c9c9"></div>
<div style="left:758px;top:149px;width:1px;height:138px;background:#c9c9c9"></div>
<div style="left:863px;top:149px;width:1px;height:138px;background:#c9c9c9"></div>
<div style="left:967px;top:149px;width:1px;height:138px;background:#c9c9c9"></div>
<div style="left:1058px;top:149px;width:1px;height:138px;background:#c9c9c9"></div>
<div style="left:1164px;top:149px;width:1px;height:138px;background:#c9c9c9"></div>
<div style="left:687px;top:149px;width:1px;height:138px;background:#c9c9c9"></div>
<div style="left:23px;top:149px;width:65px;height:18px;border:2px solid #111"></div>
<div style="left:0;top:287px;width:1204px;height:1px;background:#a0a0a0"></div>
<div style="left:0;top:0;width:0;height:0"></div>
<div style="left:0;top:338px;width:1204px;height:1px;background:#555"></div>
<div style="left:0;top:367px;width:1204px;height:447px;background:#000"></div>
<div style="left:40px;top:368px;width:998px;height:446px;background:#eeeff8"></div>
<div style="left:40px;top:368px;width:998px;height:29px;background:#fd9208"></div>
<div style="left:40px;top:368px;width:28px;height:29px;background:#e88a08"></div>
<svg style="position:absolute;left:47px;top:375px" width="14" height="14"><path d="M7 1L1 7H3V13H6V9H8V13H11V7H13Z" fill="#fff"/></svg>
<svg style="position:absolute;left:77px;top:378px" width="8" height="8"><path d="M0 1h7M0 4h7M0 7h7" stroke="#fff" stroke-width="1.3"/></svg>
<div class="nw" style="left:95px;top:368px;height:29px;line-height:29px;font-size:11px;letter-spacing:-0.08px;font-weight:bold;color:#f4ea1c;text-shadow:0 0 1px #8a6a00">POS SALES (KASIR3)</div>
<div style="left:40px;top:397px;width:28px;height:417px;background:#1b222a"></div>
<svg style="position:absolute;left:50px;top:405px" width="9" height="8"><path d="M0 2h8M6 0l2 2-2 2M8 6H0M2 4L0 6l2 2" stroke="#cfd4da" stroke-width="1" fill="none"/></svg>
<svg style="position:absolute;left:50px;top:428px" width="8" height="9"><ellipse cx="4" cy="1.8" rx="3.5" ry="1.5" fill="#cfd4da"/><rect x="0.5" y="2" width="7" height="6" fill="#cfd4da"/></svg>
<svg style="position:absolute;left:50px;top:451px" width="9" height="9"><circle cx="3" cy="5" r="2.5" fill="none" stroke="#cfd4da" stroke-width="1.5"/><circle cx="7" cy="2.5" r="1.5" fill="#cfd4da"/><circle cx="7" cy="7" r="1.3" fill="#cfd4da"/></svg>
<svg style="position:absolute;left:50px;top:475px" width="9" height="9"><circle cx="4.5" cy="4.5" r="3" fill="none" stroke="#cfd4da" stroke-width="1.5"/></svg>
<div style="left:69px;top:397px;width:728px;height:297px;background:#fff"></div>
<div style="left:69px;top:397px;width:969px;height:53px;background:#cdcdcd"></div>
<div style="left:70px;top:398px;width:968px;height:51px;background:#d2d2d2"></div>
<div class="nw" style="left:74px;top:404px;line-height:10px;font-size:7.5px;font-weight:bold;color:#222">Member<sup style="position:relative;top:-1px;left:1px;color:#d02020;font-size:5.5px;vertical-align:top;font-weight:normal">(F3)</sup></div>
<div style="left:75px;top:414px;width:156px;height:19px;background:#ececec"></div>
<div style="left:208px;top:414px;width:22px;height:19px;background:#f6f6f6"></div>
<div class="nw" style="left:76px;top:414px;line-height:19px;font-size:8px;color:#111">TUNAI</div>
<svg style="position:absolute;left:215px;top:420px" width="8" height="8"><path d="M1 1L7 7M7 1L1 7" stroke="#111" stroke-width="1.8"/></svg>
<div style="left:236px;top:403px;width:798px;height:42px;background:#d6e7f8;border:1px solid #7fa9d6;border-radius:5px"></div>
<div class="nw" style="left:240px;top:408.5px;line-height:10px;font-size:6.7px;font-weight:bold;color:#2f69b0">KETERANGAN:</div>
<div class="nw" style="left:240px;top:418.7px;line-height:10px;font-size:7px;color:#2f69b0"><b style="position:static;font-size:7.5px">F1:</b> Second Monitor</div>
<div class="nw" style="left:240px;top:430px;line-height:10px;font-size:7px;color:#2f69b0"><b style="position:static;font-size:7.5px">F3:</b> Member</div>
<div class="nw" style="left:372px;top:418.7px;line-height:10px;font-size:7px;color:#2f69b0"><b style="position:static;font-size:7.5px">F5:</b> Simpan Transaksi</div>
<div class="nw" style="left:635px;top:418.7px;line-height:10px;font-size:7px;color:#2f69b0"><b style="position:static;font-size:7.5px">F9:</b> History</div>
<div class="nw" style="left:766px;top:418.7px;line-height:10px;font-size:7px;color:#2f69b0"><b style="position:static;font-size:7.5px">F11:</b> Full Screen</div>
<div class="nw" style="left:766px;top:430px;line-height:10px;font-size:7px;color:#2f69b0"><b style="position:static;font-size:7.5px">CTRL+D:</b> Reprint Last Struk</div>
<div class="nw" style="left:898px;top:418.7px;line-height:10px;font-size:7px;color:#2f69b0"><b style="position:static;font-size:7.5px">F10:</b> Buka PreOrder</div>
<div class="nw" style="left:87px;top:451px;line-height:18px;font-size:14px;letter-spacing:-0.15px;font-weight:bold;color:#111">Jml.Items: 0 (0)</div>
<div style="left:69px;top:471px;width:728px;height:27px;background:#f0f0f0;border-top:1px solid #ead8dc"></div>
<div style="left:72px;top:473px;width:8px;height:8px;background:#1a73e8;border-radius:1.5px"></div>
<svg style="position:absolute;left:72px;top:473px" width="8" height="8"><path d="M1.5 4L3.3 5.8 6.5 2" stroke="#fff" stroke-width="1.3" fill="none"/></svg>
<div class="nw" style="left:82px;top:474px;line-height:9px;font-size:6.5px;font-weight:bold;color:#8fa4c8">popUp Qty</div>
<div class="nw" style="left:71px;top:486px;line-height:10px;font-size:7px;letter-spacing:-0.17px;font-weight:bold;-webkit-text-stroke:0.15px #c41a1a;color:#c41a1a">ANDA BELUM MEMILIH PRODUK, SILAHKAN MEMILIH PRODUK DARI</div>
<div style="left:69px;top:498px;width:728px;height:20px;background:#ededed;border-top:1px solid #d9d9d9;border-bottom:1px solid #d6cfd6"></div>
<div style="left:90px;top:498px;width:1px;height:54px;background:#d8d8d8"></div>
<div style="left:177px;top:498px;width:1px;height:54px;background:#d8d8d8"></div>
<div class="nw" style="left:73px;top:508px;line-height:9px;font-size:6.5px;font-weight:bold;color:#777">#</div>
<div class="nw" style="left:115px;top:499px;line-height:8px;font-size:5.5px;font-weight:bold;color:#c03030;width:30px;text-align:center">(ESC)</div>
<div class="nw" style="left:115px;top:507.5px;line-height:10px;font-size:7px;font-weight:bold;color:#666;width:30px;text-align:center">SKU</div>
<div class="nw" style="left:228px;top:499px;line-height:8px;font-size:5.5px;font-weight:bold;color:#c03030;width:40px;text-align:center">(SHIFT+ESC)</div>
<div class="nw" style="left:229px;top:507.5px;line-height:10px;font-size:7px;font-weight:bold;color:#666;width:40px;text-align:center">ITEMS</div>
<div style="left:69px;top:518px;width:728px;height:23px;background:#efefef"></div>
<div style="left:92px;top:520px;width:84px;height:20px;background:#fff"></div>
<div style="left:179px;top:520px;width:116px;height:20px;background:#fff"></div>
<svg style="position:absolute;left:72px;top:521px" width="17" height="17"><circle cx="8.5" cy="8.5" r="8" fill="#14893f"/><path d="M4.5 8.8L7.3 11.5 12.5 5.8" stroke="#fff" stroke-width="2.2" fill="none"/></svg>
<div style="left:69px;top:541px;width:728px;height:11px;background:#ececec;border-top:1px solid #dedede"></div>
<div class="nw" style="left:78px;top:541px;line-height:11px;font-size:6.5px;font-weight:bold;color:#555">1</div>
<div class="nw" style="left:117px;top:541px;line-height:11px;font-size:6.5px;font-weight:bold;color:#555;letter-spacing:-0.45px">123456789</div>
<div class="nw" style="left:209px;top:541px;line-height:11px;font-size:6.5px;letter-spacing:0.1px;font-weight:bold;color:#666">SILAHKAN PILIH PRODUK</div>
<div style="left:69px;top:563px;width:728px;height:1px;background:#dcdcdc"></div>
<div style="left:69px;top:575px;width:728px;height:1px;background:#dcdcdc"></div>
<div style="left:69px;top:587px;width:728px;height:1px;background:#dcdcdc"></div>
<div style="left:69px;top:599px;width:728px;height:1px;background:#dcdcdc"></div>
<div style="left:69px;top:611px;width:728px;height:1px;background:#dcdcdc"></div>
<div style="left:69px;top:623px;width:728px;height:1px;background:#dcdcdc"></div>
<div style="left:69px;top:635px;width:728px;height:1px;background:#dcdcdc"></div>
<div style="left:69px;top:647px;width:728px;height:1px;background:#dcdcdc"></div>
<div style="left:69px;top:647px;width:728px;height:1px;background:#cfcfcf"></div>
<div style="left:69px;top:652px;width:728px;height:6px;background:#d0d5de"></div>
<div class="mono nw" style="left:69px;top:663px;line-height:10px;font-size:7px;font-style:italic;color:#dadada">description note</div>
<div style="left:69px;top:688px;width:728px;height:6px;background:#d0d5de"></div>
<div style="left:797px;top:450px;width:241px;height:27px;background:#cfd3da;border-top:1px solid #e4e6ea"></div>
<div style="left:797px;top:477px;width:241px;height:218px;background:#d6e6f6"></div>
<div class="nw" style="left:797px;top:451.4px;width:241px;height:27px;line-height:27px;font-size:13px;-webkit-text-stroke:0.45px #111;color:#111;text-align:center">Informasi</div>
<div style="left:778px;top:449px;width:19px;height:21px;background:#fff"></div>
<div style="left:778px;top:551px;width:19px;height:12px;background:#efefef;border-bottom:1px solid #d8d8d8"></div>
<div class="nw" style="left:789.5px;top:552px;line-height:12px;font-size:7.5px;font-weight:bold;color:#333">0</div>
<div style="left:778px;top:563px;width:19px;height:12px;background:#efefef;border-bottom:1px solid #d8d8d8"></div>
<div class="nw" style="left:789.5px;top:564px;line-height:12px;font-size:7.5px;font-weight:bold;color:#333">0</div>
<div style="left:778px;top:575px;width:19px;height:12px;background:#efefef;border-bottom:1px solid #d8d8d8"></div>
<div class="nw" style="left:789.5px;top:576px;line-height:12px;font-size:7.5px;font-weight:bold;color:#333">0</div>
<div style="left:778px;top:587px;width:19px;height:12px;background:#efefef;border-bottom:1px solid #d8d8d8"></div>
<div class="nw" style="left:789.5px;top:588px;line-height:12px;font-size:7.5px;font-weight:bold;color:#333">0</div>
<div style="left:778px;top:599px;width:19px;height:12px;background:#efefef;border-bottom:1px solid #d8d8d8"></div>
<div class="nw" style="left:789.5px;top:600px;line-height:12px;font-size:7.5px;font-weight:bold;color:#333">0</div>
<div style="left:778px;top:611px;width:19px;height:12px;background:#efefef;border-bottom:1px solid #d8d8d8"></div>
<div class="nw" style="left:789.5px;top:612px;line-height:12px;font-size:7.5px;font-weight:bold;color:#333">0</div>
<div style="left:778px;top:623px;width:19px;height:12px;background:#efefef;border-bottom:1px solid #d8d8d8"></div>
<div class="nw" style="left:789.5px;top:624px;line-height:12px;font-size:7.5px;font-weight:bold;color:#333">0</div>
<div style="left:778px;top:635px;width:19px;height:12px;background:#efefef;border-bottom:1px solid #d8d8d8"></div>
<div class="nw" style="left:789.5px;top:636px;line-height:12px;font-size:7.5px;font-weight:bold;color:#333">0</div>
<div style="left:778px;top:470px;width:19px;height:81px;background:#efefef;border-top:1px solid #e6dde2"></div>
<div style="left:778px;top:497px;width:19px;height:1px;background:#e0d8de"></div>
<div style="left:778px;top:517px;width:19px;height:1px;background:#e0d8de"></div>
<div style="left:778px;top:541px;width:19px;height:1px;background:#dcdcdc"></div>
<div style="left:294px;top:422px;width:484px;height:390px;background:#fff;border:1px solid #8e8e8e;box-shadow:0 0 3px rgba(0,0,0,0.25)"></div>
<svg style="position:absolute;left:300px;top:426px" width="9" height="10"><rect x="0.5" y="1" width="7" height="8.5" fill="#8fc8ea" stroke="#5a8fb0" stroke-width="0.7"/><path d="M1 1l2-1h5l-1 1" fill="#cfe8f6"/></svg>
<div class="nw" style="left:311px;top:425px;line-height:11px;font-size:6.4px;color:#222">*Untitled - Notepad</div>
<svg style="position:absolute;left:714px;top:426px" width="60" height="10"><path d="M2 4.5h6" stroke="#333" stroke-width="0.9"/><rect x="25.5" y="1.5" width="5" height="5" fill="none" stroke="#333" stroke-width="0.9"/><path d="M49 1.5l5.5 5.5M54.5 1.5L49 7" stroke="#333" stroke-width="0.9"/></svg>
<div class="nw" style="left:299px;top:438px;line-height:10px;font-size:6.2px;color:#222">File</div>
<div class="nw" style="left:315px;top:438px;line-height:10px;font-size:6.2px;color:#222">Edit</div>
<div class="nw" style="left:333px;top:438px;line-height:10px;font-size:6.2px;color:#222">Format</div>
<div class="nw" style="left:360px;top:438px;line-height:10px;font-size:6.2px;color:#222">View</div>
<div class="nw" style="left:381px;top:438px;line-height:10px;font-size:6.2px;color:#222">Help</div>
<div style="left:295px;top:448px;width:482px;height:1px;background:#f0f0f0"></div>
<div style="left:769px;top:449px;width:8px;height:342px;background:#f0f0f0"></div>
<svg style="position:absolute;left:769px;top:452px" width="8" height="6"><path d="M1.5 4.5L4 2 6.5 4.5" stroke="#aaa" stroke-width="0.8" fill="none"/></svg>
<svg style="position:absolute;left:769px;top:784px" width="8" height="6"><path d="M1.5 1.5L4 4 6.5 1.5" stroke="#aaa" stroke-width="0.8" fill="none"/></svg>
<div style="left:296px;top:791px;width:473px;height:9px;background:#f0f0f0"></div>
<svg style="position:absolute;left:297px;top:792px" width="6" height="8"><path d="M4 1.5L1.8 4 4 6.5" stroke="#aaa" stroke-width="0.8" fill="none"/></svg>
<svg style="position:absolute;left:762px;top:792px" width="6" height="8"><path d="M2 1.5L4.2 4 2 6.5" stroke="#aaa" stroke-width="0.8" fill="none"/></svg>
<div style="left:769px;top:791px;width:8px;height:9px;background:#f0f0f0"></div>
<div style="left:296px;top:800px;width:481px;height:11px;background:#f0f0f0;border-top:1px solid #e2e2e2"></div>
<div style="left:553px;top:801px;width:1px;height:10px;background:#d9d9d9"></div>
<div style="left:626px;top:801px;width:1px;height:10px;background:#d9d9d9"></div>
<div style="left:651px;top:801px;width:1px;height:10px;background:#d9d9d9"></div>
<div style="left:714px;top:801px;width:1px;height:10px;background:#d9d9d9"></div>
<div class="nw" style="left:559px;top:801px;line-height:10px;font-size:5.8px;color:#333">Ln 16, Col 1</div>
<div class="nw" style="left:630px;top:801px;line-height:10px;font-size:5.8px;color:#333">140%</div>
<div class="nw" style="left:656px;top:801px;line-height:10px;font-size:5.8px;color:#333">Windows (CRLF)</div>
<div class="nw" style="left:719px;top:801px;line-height:10px;font-size:5.8px;color:#333">UTF-8</div>
<div class="mono" style="left:298.6px;top:450.2px;line-height:12.5px;font-size:10.42px;-webkit-text-stroke:0.35px #1e1e1e;color:#1e1e1e;white-space:pre">USER REQUIRMENT
===============
1. DISKON BERUPA POTONGAN, FREE PRODUK dan POINT BELANJA
- Diskon potongan berjenjang, Free Produk dan perolehan Point (MEMBER)

2. SCANNER SUPPORT
- Penggunaan alat scanner pada Aplikasi KASIR.

3. MOUSELESS
- Meminimalkan penggunaan Mouse pada Aplikasi KASIR.

4. USER-FRIENDLY
- Mudah digunakan dalam pengoperasian dan informatif.




CONTOH PRODUK DISKON
=========================================================================
|    barcode   |           Nama Produk           |      diskon          |
=========================================================================
|6957754300822 | 1 Bangku LPT B                  |          -           |
|      -       | 1000 Biskuat Coklat isi 10 pak  |          -           |
|8997204306774 | Sayang Colek 145 gr isi 30      | buy 2x free 1 (multi)|
|8997028580800 | Keju Calf Mentari Repack 200 gr | 5x - 19x (disc 3%)   |</div>
<svg style="position:absolute;left:700px;top:674px" width="92" height="36"><path d="M10.5 18 L48.5 6.6 L48.5 13.5 L86.5 13.5 L86.5 23.8 L48.5 23.8 L48.5 29.6 Z" fill="none" stroke="#e8141c" stroke-width="4.2" stroke-linejoin="round"/></svg>
<svg style="position:absolute;left:489px;top:624px" width="7" height="12"><path d="M1 1h2l0.5 0.5L4 1h2M3.5 1.5v9M1 11h2l0.5-0.5L4 11h2" stroke="#222" stroke-width="0.9" fill="none"/></svg>
</body></html>
